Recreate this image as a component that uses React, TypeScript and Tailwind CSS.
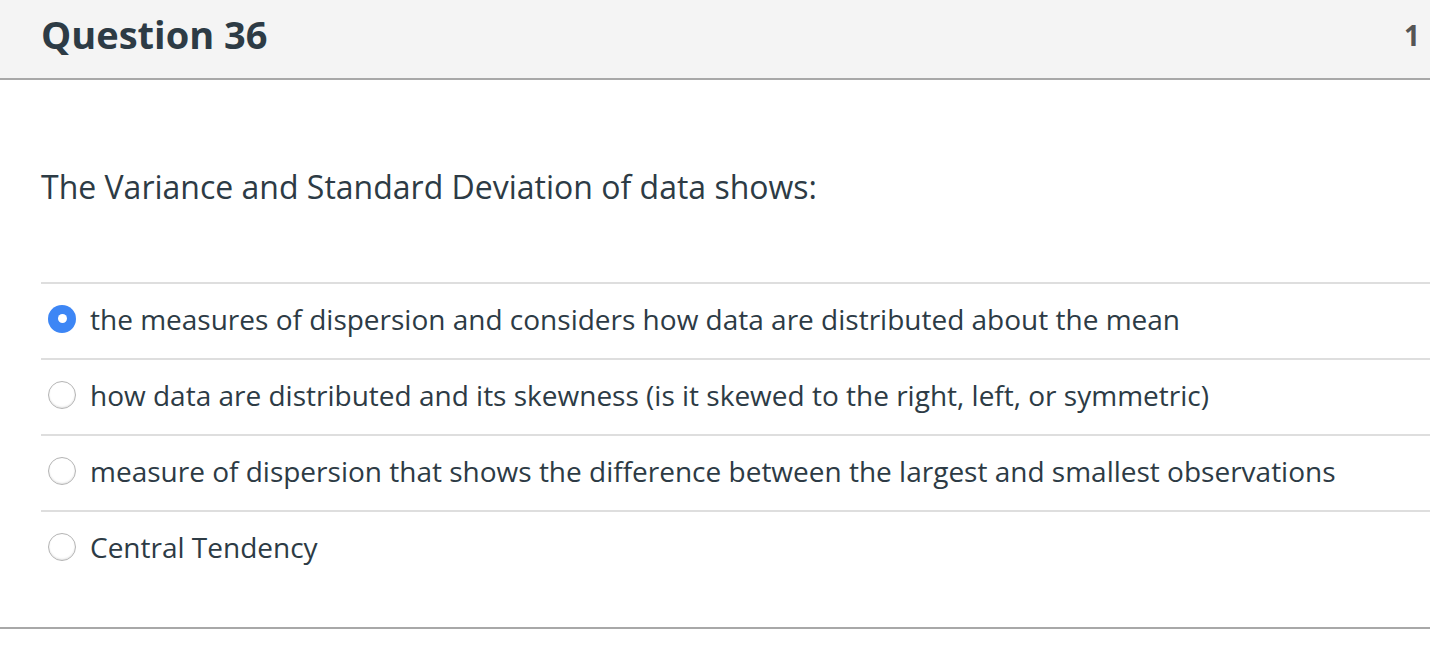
import React from "react";

const options = [
  "the measures of dispersion and considers how data are distributed about the mean",
  "how data are distributed and its skewness (is it skewed to the right, left, or symmetric)",
  "measure of dispersion that shows the difference between the largest and smallest observations",
  "Central Tendency",
];

export default function App() {
  return (
    <div className="w-[1430px] h-[650px] bg-white text-[#2d3b45]" style={{ fontFamily: '"Open Sans", sans-serif' }}>
      <div className="h-[80px] bg-[#f4f4f4] border-b-2 border-[#a8a8a8] flex items-center justify-between pl-[41px] pr-[10px]">
        <h2 className="text-[38px] font-bold leading-none -mt-[10px]">Question 36</h2>
        <span className="text-[28px] font-bold text-[#555] leading-none -mt-[8px]">1</span>
      </div>
      <div className="pl-[41px]">
        <p className="text-[32px] leading-none pt-[91px] pb-[79px]">The Variance and Standard Deviation of data shows:</p>
        <div>
          {options.map((o, i) => (
            <div key={i} className="h-[76px] border-t-2 border-[#dedede] flex items-center pb-[5px]">
              {i === 0 ? (
                <span className="w-[28px] h-[28px] rounded-full bg-[#3d86f5] flex items-center justify-center ml-[7px]">
                  <span className="w-[9px] h-[9px] rounded-full bg-white" />
                </span>
              ) : (
                <span className="w-[28px] h-[28px] rounded-full bg-white border border-[#b5b5b5] shadow-[inset_0_-1px_2px_rgba(0,0,0,0.12)] ml-[7px]" />
              )}
              <span className="text-[28px] ml-[14px] leading-none">{o}</span>
            </div>
          ))}
        </div>
      </div>
      <div className="mt-[41px] border-t-2 border-[#a8a8a8]" />
    </div>
  );
}
